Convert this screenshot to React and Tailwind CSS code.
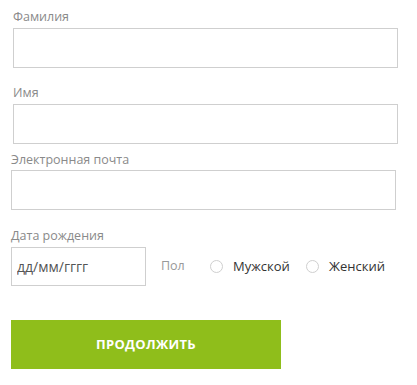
import React, { useState } from 'react';

export default function App() {
  const [gender, setGender] = useState('');

  return (
    <div className="w-[417px] h-[385px] bg-white font-['Open_Sans',sans-serif]">
      <div className="pl-[13px] pt-[9px]">
        <label className="block text-[12.5px] leading-[16px] text-[#8a8a8a]">Фамилия</label>
        <input type="text" className="mt-[3px] block w-[385px] h-[40px] border border-[#cfcfcf] outline-none" />
      </div>

      <div className="pl-[13px] pt-[17px]">
        <label className="block text-[12.5px] leading-[16px] text-[#8a8a8a]">Имя</label>
        <input type="text" className="mt-[3px] block w-[385px] h-[40px] border border-[#cfcfcf] outline-none" />
      </div>

      <div className="pl-[11px] pt-[8px]">
        <label className="block text-[12.5px] leading-[16px] text-[#8a8a8a]">Электронная почта</label>
        <input type="text" className="mt-[2px] block w-[385px] h-[40px] border border-[#cfcfcf] outline-none" />
      </div>

      <div className="pl-[11px] pt-[18px]">
        <label className="block text-[12.5px] leading-[16px] text-[#8a8a8a]">Дата рождения</label>
        <div className="mt-[3px] flex items-center">
          <input
            type="text"
            placeholder="дд/мм/гггг"
            className="block w-[135px] h-[39px] border border-[#cfcfcf] px-[5px] text-[14px] text-[#555] placeholder:text-[#555] outline-none"
          />
          <span className="ml-[15px] w-[49px] text-[12.5px] text-[#999]">Пол</span>
          <label className="flex items-center cursor-pointer" onClick={() => setGender('m')}>
            <span className="w-[13px] h-[13px] rounded-full border-[1.5px] border-[#cfcfcf]" />
            <span className="ml-[10px] w-[73px] text-[13px] text-[#333]">Мужской</span>
          </label>
          <label className="flex items-center cursor-pointer" onClick={() => setGender('f')}>
            <span className="w-[13px] h-[13px] rounded-full border-[1.5px] border-[#cfcfcf]" />
            <span className="ml-[10px] text-[13px] text-[#333]">Женский</span>
          </label>
        </div>
      </div>

      <div className="pl-[11px] pt-[34px]">
        <button className="w-[270px] h-[49px] bg-[#8fbe1b] text-white text-[13px] font-bold tracking-[0.3px]">
          ПРОДОЛЖИТЬ
        </button>
      </div>
    </div>
  );
}
